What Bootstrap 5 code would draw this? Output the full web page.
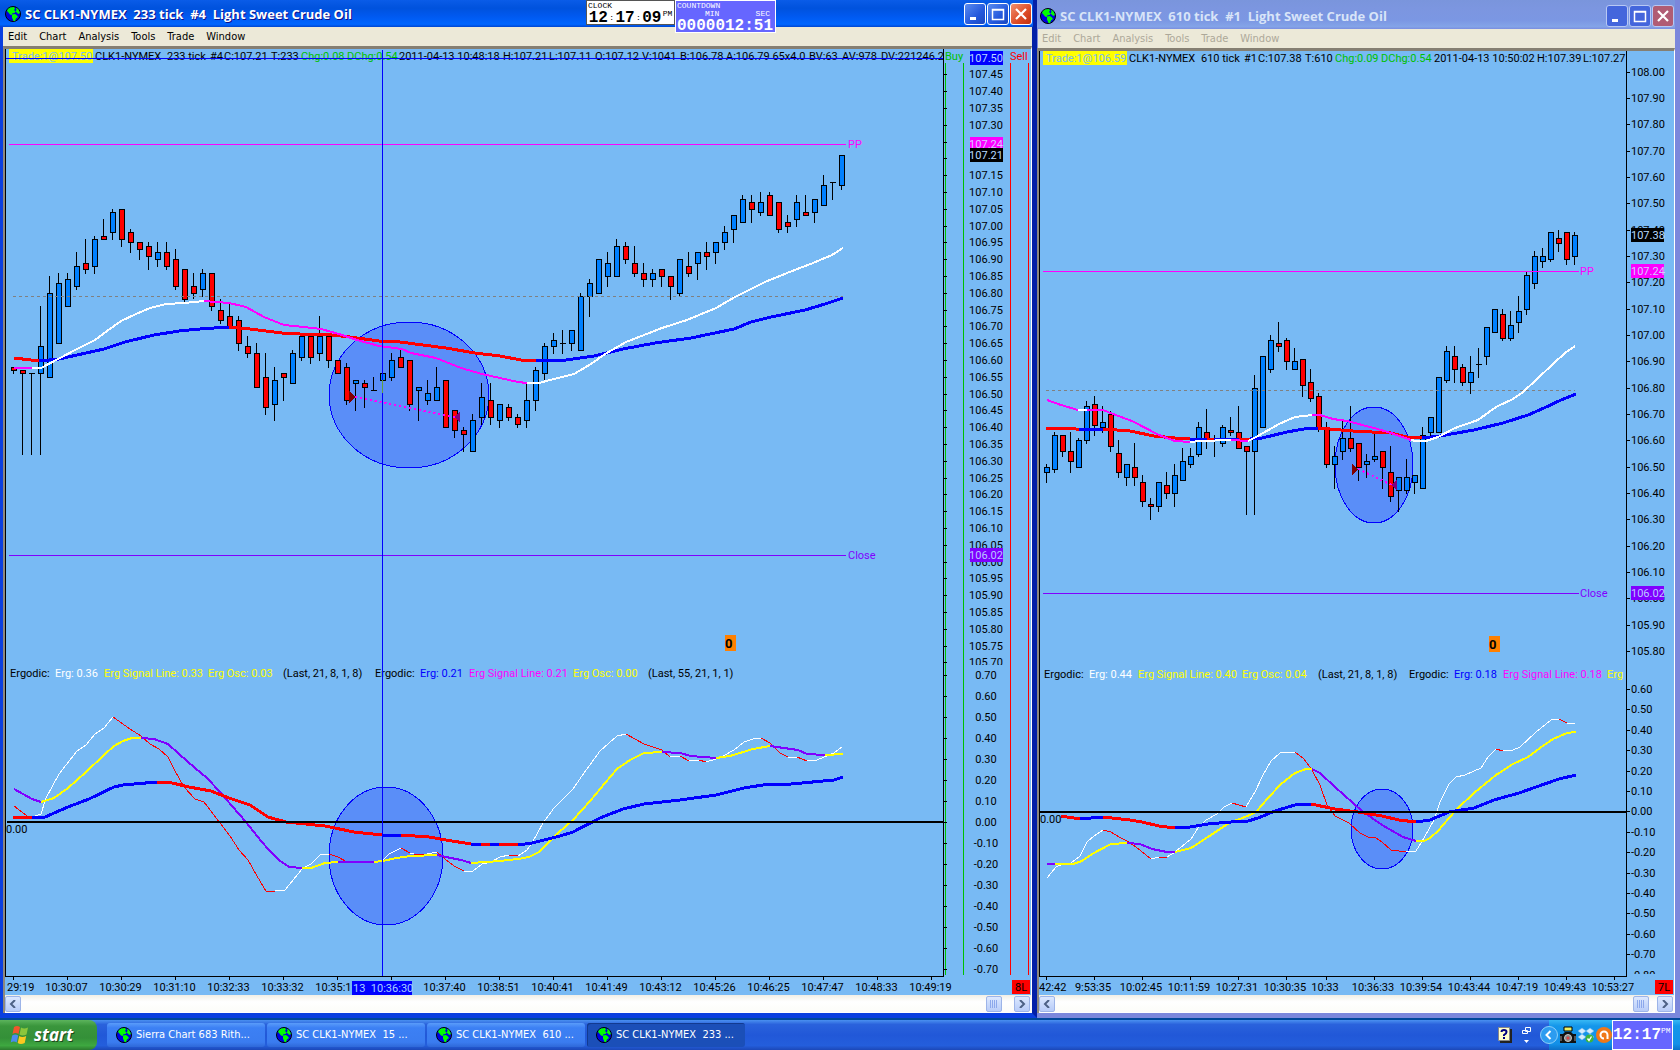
<!DOCTYPE html>
<html lang="en">
<head>
<meta charset="utf-8">
<meta name="viewport" content="width=device-width, initial-scale=1">
<title>SC CLK1-NYMEX 233 tick</title>
<link rel="stylesheet" href="https://cdn.jsdelivr.net/npm/bootstrap@5.3.0/dist/css/bootstrap.min.css">
<style>
  body { background: #004e98; font: 11px/14px "DejaVu Sans Condensed", "Noto Sans", sans-serif; overflow: hidden; }
  .desk-win { min-width: 0; }
  .win-main { flex: 1032 1 0; border-bottom: 5px solid #0a3fe0; background: #0a3fe0; border-right: 5px solid #0320a8; }
  .win-side { flex: 638 1 0; border-bottom: 5px solid #7b87dc; background: #7b87dc; border-right: 5px solid #7b87dc; }
  .title-row { font: 700 13px/18px "Open Sans", sans-serif; color: #fff; white-space: pre; }
  .win-main .title-row { height: 27px; padding: 0 1px 0 5px; margin-right: -1px; background: linear-gradient(#0a5ce8, #0052dd 30%, #0059f0 60%, #0066ff 90%, #0046d0); text-shadow: 1px 1px #0f1089; }
  .win-side .title-row { height: 29px; padding: 2px 1px 0 3px; color: #d8e4f8; background: linear-gradient(#7a95dc, #7c96e0 30%, #7b97e3 70%, #84a4e8 92%, #7a8ee0); }
  .cap-group { gap: 1px; }
  .cap-btn { width: 22px; height: 22px; padding: 0; border: 1px solid #fff; border-radius: 3px; background: linear-gradient(135deg, #5a8cf0, #2458dc 60%, #1a48c0); display: flex; align-items: center; justify-content: center; }
  .cap-close { background: linear-gradient(135deg, #f09070, #dc4a24 60%, #c03010); }
  .win-side .cap-btn { border-color: #b8c8f4; background: #4466dc; }
  .win-side .cap-close { background: #b05c74; }
  .menu-row { height: 19px; background: #ece9d8; gap: 12px; padding-left: 5px; margin-left: 3px; }
  .menu-row a { color: #000; text-decoration: none; line-height: 17px; }
  .win-side .menu-row { margin-left: 1px; padding-left: 4px; }
  .win-side .menu-row a { color: #aca899; }
  .client-box { border-top: 3px solid #857f72; border-left: 2px solid #8c8880; border-right: 1px solid #fff; background: #78baf4; }
  .win-main .client-box { margin-left: 3px; }
  .client-box > svg { display: block; width: 100%; height: auto; shape-rendering: crispEdges; }
  .client-box text { font-family: Roboto, "Liberation Sans", sans-serif; font-size: 11px; white-space: pre; }
  .client-box .zero-mark { font-size: 13px; font-weight: 700; }
  .scroll-row { height: 18px; background: linear-gradient(#f1efe6, #fff 40%, #fcfcf8); border-bottom: 1px solid #fff; padding-right: 1px; }
  .sb-btn { width: 16px; height: 16px; padding: 0; border: 1px solid #9db4e8; border-radius: 2px; background: linear-gradient(#dce8ff, #b8ccf8); display: flex; align-items: center; justify-content: center; }
  .sb-end { margin-left: 12px; }
  .clock-box { left: 586px; top: 0; width: 89px; height: 25px; background: #fff; color: #000; border: 1px solid #555; }
  .count-box { left: 675px; top: 0; width: 101px; height: 33px; background: #6666ff; color: #fff; border: 1px solid #fff; }
  .tiny-mono { font: 8px/8px "Liberation Mono", monospace; }
  .big-mono { font: bold 16px/16px "Liberation Mono", monospace; }
  .overlay-box { position: absolute; z-index: 3; padding: 1px; }
  .task-row { height: 32px; border-top: 2px solid #00489a; background: linear-gradient(#4a90f0, #2a62dc 15%, #2158d8 50%, #245edc 85%, #1c48b8); }
  .start-btn { width: 97px; border: 0; padding: 0 0 0 10px; border-radius: 0 8px 8px 0; background: linear-gradient(#5cb45c, #3a963c 20%, #349038 60%, #3ea840 85%, #2c7a2e); color: #fff; font: italic bold 17px/28px "Open Sans", sans-serif; text-shadow: 1px 1px #1c4a1c; }
  .task-list { gap: 2px; padding-left: 10px; }
  .task-btn { width: 158px; height: 24px; border: 0; border-radius: 3px; padding: 0 0 0 9px; background: linear-gradient(#5a9cfa, #3c80f4 20%, #3a7cf0 80%, #2e68d8); color: #fff; white-space: pre; text-align: left; }
  .task-on { background: #1b4fb8; box-shadow: inset 1px 1px #123a90; }
  .help-box { gap: 10px; margin-right: 17px; }
  .tray-box { background: linear-gradient(#38b8f4, #1496ea 20%, #1290e8 80%, #0c70c8); padding-right: 7px; }
  .tray-icons { gap: 2px; margin-left: -9px; }
  .tray-clock { width: 61px; background: #6666ff; border: 1px solid #fff; color: #fff; }
</style>
<script src="https://cdn.jsdelivr.net/npm/bootstrap@5.3.0/dist/js/bootstrap.bundle.min.js"></script>
</head>
<body class="d-flex flex-column vh-100">
<svg width="0" height="0" class="position-absolute" aria-hidden="true">
  <symbol id="globe" viewBox="0 0 16 16">
    <circle cx="8" cy="8" r="7.5" fill="#0000e0" stroke="#000"/>
    <path d="M2 5l1-2 2-1.500 4-.500 1 1.500-1 1.500 1.500 1.500-1 1.500-2.500.500 0 1.500-2-.500-1.500-2zM7 8.500l3-.500 2 1.500 1 1.500-2 1.500-1 2.500-1.500 0-1.500-3.500zM11 1.500l2.500 2 1.500 3.500-2 1-1-1.500-1.500-.500 1-2z" fill="#0f0"/>
  </symbol>
  <symbol id="sb-l" viewBox="0 0 8 8"><path d="M6 0L2 4l4 4" fill="none" stroke="#4d6185" stroke-width="2"/></symbol>
  <symbol id="sb-r" viewBox="0 0 8 8"><path d="M2 0l4 4-4 4" fill="none" stroke="#4d6185" stroke-width="2"/></symbol>
  <symbol id="sb-grip" viewBox="0 0 8 8"><path d="M.500 0v8M2.500 0v8M4.500 0v8M6.500 0v8" stroke="#8ca8ec"/></symbol>
  <symbol id="cap-min" viewBox="0 0 14 14"><path d="M2 10h6v3H2z" fill="#fff"/></symbol>
  <symbol id="cap-max" viewBox="0 0 14 14"><path d="M1.500 2.500h11v10h-11zM1 3h12" fill="none" stroke="#fff" stroke-width="1.500"/></symbol>
  <symbol id="cap-x" viewBox="0 0 14 14"><path d="M2 2l10 10M12 2L2 12" stroke="#fff" stroke-width="2.200"/></symbol>
</svg>

<main class="d-flex align-items-start">
  <section class="desk-win win-main position-relative" aria-label="233 tick chart">
    <header class="title-row d-flex align-items-center">
      <svg width="16" height="16"><use href="#globe"/></svg>
      <span class="ms-1">SC CLK1-NYMEX  233 tick  #4  Light Sweet Crude Oil</span>
      <div class="d-flex ms-auto cap-group">
        <button class="cap-btn" aria-label="Minimize"><svg width="14" height="14"><use href="#cap-min"/></svg></button>
        <button class="cap-btn" aria-label="Maximize"><svg width="14" height="14"><use href="#cap-max"/></svg></button>
        <button class="cap-btn cap-close" aria-label="Close"><svg width="14" height="14"><use href="#cap-x"/></svg></button>
      </div>
    </header>
    <div class="overlay-box clock-box tiny-mono">
      <div>CLOCK</div>
      <div class="d-flex justify-content-around align-items-center">
        <span class="big-mono">12</span><span>:</span><span class="big-mono">17</span><span>:</span><span class="big-mono">09</span><span class="align-self-start">PM</span>
      </div>
    </div>
    <div class="overlay-box count-box tiny-mono">
      <div>COUNTDOWN</div>
      <div class="d-flex justify-content-between ps-4 pe-1"><span class="ps-1">MIN</span><span>SEC</span></div>
      <div class="big-mono">0000012:51</div>
    </div>
    <nav class="menu-row d-flex align-items-center">
      <a href="#">Edit</a><a href="#">Chart</a><a href="#">Analysis</a><a href="#">Tools</a><a href="#">Trade</a><a href="#">Window</a>
    </nav>
    <div class="client-box">
      <svg id="chart-233" viewBox="5 49 1026 946" role="img" aria-label="CLK1-NYMEX 233 tick"></svg>
      <div class="scroll-row d-flex align-items-center">
        <button class="sb-btn" aria-label="Scroll left"><svg width="8" height="8"><use href="#sb-l"/></svg></button>
        <button class="sb-btn ms-auto" aria-label="Scroll position"><svg width="8" height="8"><use href="#sb-grip"/></svg></button>
        <button class="sb-btn sb-end" aria-label="Scroll right"><svg width="8" height="8"><use href="#sb-r"/></svg></button>
      </div>
    </div>
  </section>

  <section class="desk-win win-side" aria-label="610 tick chart">
    <header class="title-row d-flex align-items-center">
      <svg width="16" height="16"><use href="#globe"/></svg>
      <span class="ms-1">SC CLK1-NYMEX  610 tick  #1  Light Sweet Crude Oil</span>
      <div class="d-flex ms-auto cap-group">
        <button class="cap-btn" aria-label="Minimize"><svg width="14" height="14"><use href="#cap-min"/></svg></button>
        <button class="cap-btn" aria-label="Maximize"><svg width="14" height="14"><use href="#cap-max"/></svg></button>
        <button class="cap-btn cap-close" aria-label="Close"><svg width="14" height="14"><use href="#cap-x"/></svg></button>
      </div>
    </header>
    <nav class="menu-row d-flex align-items-center">
      <a href="#">Edit</a><a href="#">Chart</a><a href="#">Analysis</a><a href="#">Tools</a><a href="#">Trade</a><a href="#">Window</a>
    </nav>
    <div class="client-box">
      <svg id="chart-610" viewBox="1039 51 635 944" role="img" aria-label="CLK1-NYMEX 610 tick"></svg>
      <div class="scroll-row d-flex align-items-center">
        <button class="sb-btn" aria-label="Scroll left"><svg width="8" height="8"><use href="#sb-l"/></svg></button>
        <button class="sb-btn ms-auto" aria-label="Scroll position"><svg width="8" height="8"><use href="#sb-grip"/></svg></button>
        <button class="sb-btn ms-2" aria-label="Scroll right"><svg width="8" height="8"><use href="#sb-r"/></svg></button>
      </div>
    </div>
  </section>
</main>

<footer class="task-row d-flex align-items-stretch mt-auto">
  <button class="start-btn d-flex align-items-center gap-1">
    <svg width="20" height="20" viewBox="0 0 20 20">
      <path d="M4 2q3-2 6 0l-1.500 7q-3-2-6 0z" fill="#f0562c"/><path d="M11 2.500q3 2 7 0l-1.500 7q-4 2-7 0z" fill="#8bc63c"/>
      <path d="M2.200 10.500q3-2 6 0l-1.500 7q-3-2-6 0z" fill="#4a8cf0"/><path d="M9.200 11q3 2 7 0l-1.500 7q-4 2-7 0z" fill="#fcc820"/>
    </svg>start</button>
  <div class="d-flex align-items-center task-list">
    <button class="task-btn d-flex align-items-center gap-1"><svg width="16" height="16"><use href="#globe"/></svg>Sierra Chart 683 Rith...</button>
    <button class="task-btn d-flex align-items-center gap-1"><svg width="16" height="16"><use href="#globe"/></svg>SC CLK1-NYMEX  15 ...</button>
    <button class="task-btn d-flex align-items-center gap-1"><svg width="16" height="16"><use href="#globe"/></svg>SC CLK1-NYMEX  610 ...</button>
    <button class="task-btn task-on d-flex align-items-center gap-1"><svg width="16" height="16"><use href="#globe"/></svg>SC CLK1-NYMEX  233 ...</button>
  </div>
  <div class="d-flex align-items-center ms-auto help-box">
    <svg width="14" height="16" viewBox="0 0 14 16"><path d="M2 2h12v14H2z" fill="#222"/><path d="M.500.500h11v13h-11z" fill="#ffffcc" stroke="#888"/><path d="M3.500 5q0-2 2.500-2t2.500 2q0 1.500-2.500 3v1" fill="none" stroke="#000080" stroke-width="2"/><path d="M5 10h2v2H5z" fill="#000080"/></svg>
    <svg width="10" height="18" viewBox="0 0 10 18"><path d="M3.500 1.500h5v4h-5zM.500 4.500h5v3h-5z" fill="#245edc" stroke="#fff"/><path d="M2 14h5l-2.500 3z" fill="#fff"/></svg>
  </div>
  <div class="tray-box d-flex align-items-stretch">
    <div class="tray-icons d-flex align-items-center">
      <svg width="18" height="18" viewBox="0 0 18 18"><circle cx="9" cy="9" r="8.500" fill="#2c9cf0" stroke="#8cd0fa"/><path d="M10.500 5L6.500 9l4 4" fill="none" stroke="#fff" stroke-width="2"/></svg>
      <svg width="16" height="18" viewBox="0 0 16 18"><path d="M4 1h8v4H4z" fill="#f0f060" stroke="#000"/><path d="M0 8h3l2-2h6l2 2h3v9H0z" fill="#111"/><circle cx="8" cy="12" r="3.500" fill="#888" stroke="#ccc"/><circle cx="8" cy="12" r="1.500" fill="#d44"/><path d="M1 10v5M15 10v5" stroke="#999"/></svg>
      <svg width="16" height="16" viewBox="0 0 16 16"><path d="M4 1l4 3-4 3-4-3zM12 1l4 3-4 3-4-3zM4 7l4 3-4 3-4-3zM12 7l4 3-4 3-4-3z" fill="#d4ecfc" stroke="#6ab4ec" stroke-width=".5"/><circle cx="11.500" cy="11.500" r="4" fill="#3cb43c"/><path d="M9.500 11.500l1.500 2 2.500-4" fill="none" stroke="#fff" stroke-width="1.400"/></svg>
      <svg width="16" height="16" viewBox="0 0 16 16"><circle cx="8" cy="8" r="8" fill="#f07818"/><path d="M11.500 12V8a3.500 3.500 0 1 0-3.500 3.500" fill="none" stroke="#fff" stroke-width="2"/></svg>
    </div>
    <div class="tray-clock d-flex align-items-center"><span class="big-mono">12:17</span><span class="tiny-mono pb-2">PM</span></div>
  </div>
</footer>

<script>
const BLUE = '#0000ff', RED = '#ff0000', WHITE = '#ffffff', MAG = '#ff00ff', YEL = '#ffff00', PUR = '#8000ff', SKY = '#78baf4', GRN = '#00c000';
const line = (x1, y1, x2, y2, c, extra = '') => `<line x1="${x1}" y1="${y1}" x2="${x2}" y2="${y2}" stroke="${c}" ${extra}/>`;
const box = (x, y, w, h, c) => `<rect x="${x}" y="${y}" width="${w}" height="${h}" fill="${c}"/>`;
const label = (x, y, s, c = '#000', extra = '') => `<text x="${x}" y="${y}" fill="${c}" ${extra}>${s}</text>`;
const labels = (y, rows) => rows.map(([x, t, c]) => label(x, y, t, c)).join('');
const mid = 'text-anchor="middle"';
const ellipse = e => `<ellipse cx="${e[0]}" cy="${e[1]}" rx="${e[2]}" ry="${e[3]}" fill="#5a8ef8" stroke="#0000ff"/>`;

// Each candle: body top, body bottom, high, low, kind (1 up, 0 down)
function candles(x0, step, rows) {
  return rows.trim().split(/\s*;\s*/).filter(Boolean).map((r, i) => {
    const [t, b, h, l, k] = r.split(',').map(Number), x = x0 + step * i;
    const body = t === b ? line(x - 3, t + .5, x + 3, t + .5, '#000')
      : `<rect x="${x - 2}" y="${t + .5}" width="5" height="${b - t}" fill="${k ? '#0080ff' : '#ff0000'}" stroke="#000"/>`;
    return line(x, h, x, l + 1, '#000') + body;
  }).join('');
}
// A study line that changes colour from part to part
function study(width, parts) {
  let last = '';
  return parts.map(([c, pts]) => {
    const p = (last + ' ' + pts).trim(); last = p.split(' ').pop();
    return `<polyline points="${p}" fill="none" stroke="${c}" stroke-width="${width}"/>`;
  }).join('');
}

// ---- 233 tick ----
let s = '<clipPath id="head-clip"><path d="M5 49h938v20H5z"/></clipPath>';
s += ellipse([409, 395, 80, 73]) + ellipse([386, 856, 57, 69]);
s += candles(13.5, 9, `367,370,367,373,0;370,373,370,454,0;373,373,373,454,0;346,373,306,454,1;293,377,276,377,1;283,343,273,343,1;279,306,273,306,1;266,286,252,289,1;263,269,239,273,0;239,266,236,273,1;
236,239,219,239,0;212,232,209,239,1;209,239,209,246,0;232,242,229,252,0;242,249,242,259,0;246,256,242,269,0;252,259,242,266,1;252,266,242,269,0;259,286,249,289,0;269,299,269,302,0;
286,293,273,298,0;273,289,269,296,1;273,306,273,310,0;310,320,299,323,0;316,326,303,326,0;320,343,316,350,0;346,353,336,357,0;353,387,343,387,0;377,407,353,414,0;380,404,367,420,1;
373,377,373,400,0;353,383,350,383,1;336,357,336,360,1;336,357,336,363,0;336,353,316,360,1;336,360,336,367,0;360,373,360,373,0;367,400,363,404,0;380,383,380,410,1;383,387,380,407,0;
390,390,377,390,0;373,380,373,380,1;360,377,353,380,1;357,367,350,367,0;360,404,360,410,0;387,390,387,420,1;393,400,380,404,1;387,400,367,400,1;380,427,380,427,0;410,430,410,437,0;
430,434,427,451,0;420,451,414,451,1;397,417,383,424,1;400,417,383,424,0;404,420,404,427,1;407,417,404,420,0;417,424,414,427,0;400,420,383,427,1;370,400,367,410,1;346,373,343,380,1;
340,346,333,353,1;343,343,330,353,0;330,343,330,350,1;296,350,293,350,1;283,296,279,316,1;259,293,259,293,1;263,276,252,286,1;246,276,239,276,1;246,259,242,263,0;263,273,246,276,0;
273,279,263,286,0;273,279,269,286,1;269,276,269,286,0;276,286,276,299,0;259,293,259,296,1;266,273,252,276,0;252,263,252,279,1;252,256,242,269,0;242,252,242,263,1;232,242,226,249,1;
215,229,215,242,1;199,222,195,222,1;202,209,195,222,0;202,212,192,215,1;195,215,192,215,0;202,229,202,232,0;222,226,215,232,0;202,219,195,226,1;212,215,195,215,0;199,212,199,222,1;
185,205,175,205,1;182,182,182,199,0;155,185,155,189,1`);
s += line(13, 296.5, 843, 296.5, '#808080', 'stroke-dasharray="3 3"');
s += line(9, 144.5, 846, 144.5, MAG) + label(848, 148, 'PP', MAG);
s += line(9, 555.5, 846, 555.5, PUR) + label(848, 559, 'Close', PUR);
s += study(3, [[RED, '14,358 39,361'], [BLUE, '59,359 77,355 104,349 125,342 154,335 179,331 200,329 229,327'], [RED, '250,329 282,333 300,334 332,335 350,337 379,341 400,342 446,348 475,353 500,356 521,360 536,361'], [BLUE, '566,360 594,356 623,349 655,343 691,338 734,329 751,322 771,317 805,310 825,304 843,298']]);
s += study(2, [[MAG, '14,368 32,368'], [WHITE, '41,368 60,358 77,349 95,340 107,331 121,321 136,314 150,308 166,304 184,303 204,301'], [MAG, '229,303 246,307 264,317 284,325 304,327 321,329 339,334 357,340 379,346 402,349 411,353 436,358 461,368 482,374 500,378 518,382 527,383'], [WHITE, '539,383 550,380 574,374 591,364 605,354 626,342 644,335 662,328 687,320 716,308 735,297 765,282 787,273 813,263 832,255 843,248']]);
s += '<path d="M349 391l6 6-6 6z" fill="#800000"/><path d="M460 412l-6 5 6 6z" fill="#800080"/>' + line(355, 397, 455, 417, MAG, 'stroke-width="2" stroke-dasharray="2 3"');
s += box(725, 635, 11, 16, '#ff8000') + label(725, 648, '0', '#000', 'class="zero-mark"');
s += study(1, [[RED, '14,806 30,818'], [WHITE, '41,814 46,798 59,774 77,751 86,745 95,734 104,728 113,717'], [RED, '130,729 141,736 150,744 159,749 168,757 175,771 184,787 195,799 204,802 220,823 230,836 239,850 248,860 257,876 266,891 275,891'], [WHITE, '285,890 302,869 311,864 320,855 329,854'], [RED, '338,857 347,862'], [WHITE, '356,862'], [RED, '374,862'], [WHITE, '383,860 389,854 401,848'], [RED, '410,853'], [WHITE, '414,854'], [RED, '427,854'], [WHITE, '437,852'], [RED, '445,859 454,866 464,871'], [WHITE, '473,871 482,864 491,862 500,857 509,855'], [RED, '518,856'], [WHITE, '527,850 532,843 543,823 554,808 573,789 584,773 600,751 617,736 626,734'], [RED, '635,739 644,744 662,750 670,757'], [WHITE, '680,756'], [RED, '689,761'], [WHITE, '699,760'], [RED, '706,762'], [WHITE, '716,759 725,755 734,750 744,742 753,739 761,738'], [RED, '770,743 780,753 788,757'], [WHITE, '797,757'], [RED, '807,761'], [WHITE, '817,760 834,753 842,747']]);
s += study(2, [[PUR, '14,789 32,799 41,802'], [YEL, '54,798 68,788 86,772 104,755 114,746 123,741 132,738 141,738'], [PUR, '154,739 168,744 179,754 195,768 207,778 221,793 232,806 246,822 257,836 268,849 279,860 289,867 302,868'], [YEL, '311,868 325,863 338,862'], [PUR, '374,862'], [YEL, '383,861 396,858 411,856 437,855'], [PUR, '446,857 461,860 471,863'], [YEL, '500,861 518,859 529,857 539,852 558,833 573,820 591,800 605,783 617,769 630,760 644,753 662,752'], [PUR, '680,753 691,756 716,758'], [YEL, '730,756 753,749 770,746'], [PUR, '784,748 798,750 807,754 825,755'], [YEL, '843,754']]);
s += study(3, [[RED, '13,817 32,818'], [BLUE, '45,817 68,807 89,799 114,787 123,785 157,782'], [RED, '168,782 189,787 211,791 229,798 250,805 268,817 286,822 325,826 354,832 382,835'], [BLUE, '401,835'], [RED, '429,837 446,840 471,844'], [BLUE, '481,844'], [RED, '490,844'], [BLUE, '499,844'], [RED, '518,845'], [BLUE, '532,843 560,836 573,832 600,818 623,809 644,804 680,800 716,795 744,788 769,784 791,784 834,780 843,777']]);
s += line(7, 822, 943, 822, '#000', 'stroke-width="2"') + label(6, 833, '0.00');
// heading and legend
s += box(9, 49, 84, 14, YEL) + labels(60, [[12, 'Trade:1@107.50', SKY], [95, 'CLK1-NYMEX', '#000'], [167, '233 tick', '#000'], [210, '#4', '#000'], [224, 'C:107.21', '#000'], [271, 'T:233', '#000'], [301, 'Chg:0.08', GRN], [347, 'DChg:0.54', GRN]]);
s += `<g clip-path="url(#head-clip)">${labels(60, [[399, '2011-04-13 10:48:18', '#000'], [503, 'H:107.21', '#000'], [549, 'L:107.11', '#000'], [595, 'O:107.12', '#000'], [642, 'V:1041', '#000'], [680, 'B:106.78', '#000'], [726, 'A:106.79 65x4.0', '#000'], [809, 'BV:63', '#000'], [842, 'AV:978', '#000'], [881, 'DV:221246.2', '#000']])}</g>`;
s += labels(677, [[10, 'Ergodic:', '#000'], [55, 'Erg: 0.36', WHITE], [104, 'Erg Signal Line: 0.33', YEL], [208, 'Erg Osc: 0.03', YEL], [283, '(Last, 21, 8, 1, 8)', '#000'], [375, 'Ergodic:', '#000'], [420, 'Erg: 0.21', BLUE], [469, 'Erg Signal Line: 0.21', MAG], [573, 'Erg Osc: 0.00', YEL], [648, '(Last, 55, 21, 1, 1)', '#000']]);
// axes
s += line(5.5, 49, 5.5, 977, '#000') + line(5, 976.5, 944, 976.5, '#000') + line(943.5, 49, 943.5, 977, '#000');
s += line(945.5, 63, 945.5, 975, GRN) + line(963.5, 63, 963.5, 975, GRN) + line(1010.5, 63, 1010.5, 975, RED) + line(1028.5, 63, 1028.5, 975, RED);
s += label(945, 60, 'Buy', GRN) + label(1010, 60, 'Sell', RED);
for (let i = 1; i <= 36; i++) {
  const y = Math.round(57.5 + i * 16.8);
  s += line(944, y + .5, 947, y + .5, '#000');
  if (![5, 6].includes(i)) s += label(986, y + 4, (107.5 - i * .05).toFixed(2), '#000', mid);
}
s += box(970, 665, 33, 4, SKY);
for (let i = 0; i <= 14; i++) {
  const y = 675 + i * 21;
  s += line(944, y + .5, 947, y + .5, '#000') + label(986, y + 4, (.7 - i * .1).toFixed(2).replace('-0.00', '0.00'), '#000', mid);
}
s += box(970, 51, 33, 14, BLUE) + label(986, 62, '107.50', '#b8d8ff', mid) + box(970, 137, 33, 14, MAG) + label(986, 148, '107.24', '#d8c8ff', mid) + box(970, 148, 33, 14, '#000') + label(986, 159, '107.21', '#b8dcff', mid) + box(970, 548, 33, 14, PUR) + label(986, 559, '106.02', '#b8c8ff', mid);
'10:29:19 10:30:07 10:30:29 10:31:10 10:32:33 10:33:32 10:35:11 10:36:30 10:37:40 10:38:51 10:40:41 10:41:49 10:43:12 10:45:26 10:46:25 10:47:47 10:48:33 10:49:19'.split(' ').forEach((t, i) => {
  const x = 13.5 + i * 54;
  s += line(x, 977, x, 980, '#000');
  if (i !== 7) s += i ? label(x - 1, 991, t, '#000', mid) : label(7, 991, '29:19');
});
s += box(352, 981, 60, 14, BLUE) + label(353, 992, '13  10:36:30', '#a8d0ff') + box(1012, 980, 18, 14, RED) + label(1015, 991, '8L');
s += line(382.5, 50, 382.5, 976, BLUE) + line(6, 58.5, 943, 58.5, BLUE) + line(382.5, 380, 382.5, 393, '#60a040');
document.getElementById('chart-233').innerHTML = s;

// ---- 610 tick ----
s = ellipse([1374, 465, 39, 58]) + ellipse([1382, 829, 31, 40]);
s += candles(1046.5, 8, `467,472,464,482,1;435,469,432,472,1;435,451,435,456,0;451,461,432,472,0;440,467,438,467,1;406,440,401,443,1;404,425,396,435,0;422,427,406,432,1;414,446,411,451,0;453,472,440,477,0;
464,477,464,485,1;467,477,443,485,0;482,501,475,506,0;504,506,498,519,0;482,506,482,511,1;485,493,472,498,0;475,493,464,506,1;461,480,448,480,1;456,464,448,467,1;427,454,422,456,1;
432,439,409,448,0;439,439,435,456,0;427,443,425,446,1;430,432,417,435,0;432,448,406,448,0;446,451,446,514,0;388,451,375,514,1;356,427,356,427,1;340,369,335,372,1;343,346,322,351,0;
340,361,338,369,0;361,369,348,369,1;359,385,359,396,0;382,398,369,401,0;396,427,393,431,0;429,464,422,467,0;456,464,446,488,1;438,451,421,459,1;438,448,406,451,0;443,467,443,480,0;
461,464,454,477,1;456,459,434,461,1;451,467,451,488,0;472,496,446,501,0;477,490,477,511,1;477,490,459,493,1;475,482,475,493,1;435,488,427,488,1;417,432,417,435,1;377,432,377,432,1;
351,380,346,382,1;356,369,346,382,0;367,382,364,385,0;372,382,356,393,1;364,364,348,377,0;327,356,327,364,1;309,332,309,332,1;314,338,309,340,0;325,338,311,340,1;311,322,296,332,1;
275,309,272,314,1;256,283,251,288,1;256,261,248,267,1;232,259,232,261,1;238,243,230,251,0;232,259,232,264,0;235,256,232,264,1`);
s += line(1046, 390.5, 1575, 390.5, '#808080', 'stroke-dasharray="3 3"');
s += line(1043, 271.5, 1579, 271.5, MAG) + label(1580, 275, 'PP', MAG);
s += line(1043, 593.5, 1579, 593.5, PUR) + label(1580, 597, 'Close', PUR);
s += study(3, [[RED, '1046,428 1076,429 1079,430'], [BLUE, '1103,429'], [RED, '1130,431 1154,436 1175,438 1190,439'], [BLUE, '1207,439'], [RED, '1214,439'], [BLUE, '1239,439'], [RED, '1250,439'], [BLUE, '1262,438 1287,432 1304,429 1318,428'], [RED, '1353,431 1391,433 1407,437 1422,438'], [BLUE, '1440,436 1474,430 1503,423 1528,415 1544,408 1561,400 1576,394']]);
s += study(2, [[MAG, '1047,400 1061,405 1078,410'], [WHITE, '1087,410'], [MAG, '1103,410 1113,414 1132,421 1159,435 1175,441 1190,442'], [WHITE, '1200,441 1231,440'], [MAG, '1248,441'], [WHITE, '1256,437 1279,424 1295,417 1312,415'], [MAG, '1320,415 1333,419 1347,421 1374,428 1391,433 1411,440'], [WHITE, '1416,441 1426,441 1438,437 1455,428 1478,420 1496,407 1513,399 1523,392 1536,380 1554,363 1565,353 1575,346']]);
s += '<path d="M1352 464l6 5-6 6z" fill="#800000"/><path d="M1397 480l-6 5 6 6z" fill="#800080"/>' + line(1358, 469, 1392, 485, MAG, 'stroke-width="2" stroke-dasharray="2 3"');
s += box(1489, 636, 11, 16, '#ff8000') + label(1489, 649, '0', '#000', 'class="zero-mark"');
s += study(1, [[WHITE, '1047,878 1056,867 1063,864 1071,863 1080,856 1087,842 1094,836 1103,830'], [RED, '1111,832 1119,837 1127,841 1136,847 1151,859'], [WHITE, '1159,857'], [RED, '1167,857'], [WHITE, '1175,852 1191,839 1198,828 1206,820 1217,814 1224,807 1232,803'], [RED, '1246,807'], [WHITE, '1255,792 1263,775 1271,761 1280,753 1295,752'], [RED, '1304,759 1312,770 1320,785 1327,805 1335,816 1349,823 1360,833 1368,837 1376,838 1382,842 1391,850 1406,852'], [WHITE, '1416,851 1424,838 1434,820 1440,802 1449,784 1456,777 1465,775 1481,768 1488,757 1496,749'], [RED, '1503,751'], [WHITE, '1513,750 1520,747 1536,732 1551,720 1559,719'], [RED, '1567,723'], [WHITE, '1575,723']]);
s += study(2, [[PUR, '1047,864 1055,864'], [YEL, '1073,864 1082,861 1092,854 1111,844 1127,843'], [PUR, '1140,844 1152,849 1167,852 1175,852'], [YEL, '1191,848 1208,837 1229,823 1250,815 1256,812 1268,798 1281,784 1295,773 1306,769 1312,769'], [PUR, '1320,773 1335,787 1362,811 1382,825 1403,837 1416,841'], [YEL, '1424,841 1430,838 1438,831 1449,818 1457,809 1474,793 1496,775 1513,764 1528,757 1540,748 1553,739 1567,733 1576,732']]);
s += study(3, [[RED, '1061,816 1080,819'], [BLUE, '1103,817'], [RED, '1130,820 1142,822 1159,826 1175,828'], [BLUE, '1190,827 1208,824 1231,822 1248,821 1258,818 1275,811 1295,805 1311,804'], [RED, '1335,809 1358,812 1382,816 1399,820 1416,822'], [BLUE, '1430,820 1449,812 1474,808 1494,800 1519,793 1536,787 1559,779 1576,775']]);
s += line(1040, 812, 1626, 812, '#000', 'stroke-width="2"') + label(1040, 823, '0.00');
s += box(1043, 51, 84, 14, YEL) + labels(62, [[1046, 'Trade:1@106.59', SKY], [1129, 'CLK1-NYMEX', '#000'], [1201, '610 tick', '#000'], [1244, '#1', '#000'], [1258, 'C:107.38', '#000'], [1305, 'T:610', '#000'], [1335, 'Chg:0.09', GRN], [1381, 'DChg:0.54', GRN], [1434, '2011-04-13 10:50:02', '#000'], [1537, 'H:107.39', '#000'], [1583, 'L:107.27', '#000']]);
s += labels(678, [[1044, 'Ergodic:', '#000'], [1089, 'Erg: 0.44', WHITE], [1138, 'Erg Signal Line: 0.40', YEL], [1242, 'Erg Osc: 0.04', YEL], [1318, '(Last, 21, 8, 1, 8)', '#000'], [1409, 'Ergodic:', '#000'], [1454, 'Erg: 0.18', BLUE], [1503, 'Erg Signal Line: 0.18', MAG], [1607, 'Erg', YEL]]);
s += line(1039.5, 51, 1039.5, 977, '#000') + line(1039, 976.5, 1627, 976.5, '#000') + line(1626.5, 51, 1626.5, 977, '#000');
for (let i = 0; i <= 22; i++) {
  const y = Math.round(71.8 + i * 26.33);
  s += line(1627, y + .5, 1630, y + .5, '#000') + label(1631, y + 4, (108 - i * .1).toFixed(2));
}
for (let i = 0; i <= 14; i++) {
  const y = Math.round(689 + i * 20.4);
  if (i < 14) s += line(1627, y + .5, 1630, y + .5, '#000');
  s += label(1631, y + 4, (.6 - i * .1).toFixed(2).replace('-0.00', '0.00'));
}
s += box(1628, 974, 40, 6, SKY);
s += box(1631, 228, 33, 14, '#000') + label(1631, 239, '107.38', '#b8dcff') + box(1631, 264, 33, 14, MAG) + label(1631, 275, '107.24', '#d8c8ff') + box(1631, 586, 33, 14, PUR) + label(1631, 597, '106.02', '#b8c8ff');
[[1046, '42:42'], [1094, '9:53:35'], [1142, '10:02:45'], [1190, '10:11:59'], [1238, '10:27:31'], [1286, '10:30:35'], [1326, '10:33'], [1374, '10:36:33'], [1422, '10:39:54'], [1470, '10:43:44'], [1518, '10:47:19'], [1566, '10:49:43'], [1614, '10:53:27']].forEach(([x, t], i) => {
  s += line(x + .5, 977, x + .5, 980, '#000') + (i ? label(x - 1, 991, t, '#000', mid) : label(1039, 991, t));
});
s += box(1655, 980, 18, 14, RED) + label(1658, 991, '7L');
document.getElementById('chart-610').innerHTML = s;
</script>
</body>
</html>
